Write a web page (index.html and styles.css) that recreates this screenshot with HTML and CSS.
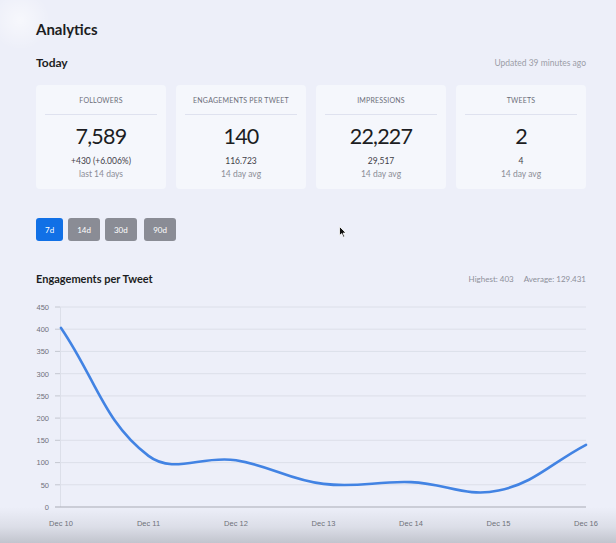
FILE: index.html
```html
<!DOCTYPE html>
<html>
<head>
<meta charset="utf-8">
<link rel="stylesheet" href="styles.css">
</head>
<body>
<div class="page">
  <h1 class="title">Analytics</h1>
  <div class="row-head">
    <h2 class="section">Today</h2>
    <span class="muted">Updated 39 minutes ago</span>
  </div>
  <div class="cards">
    <div class="card">
      <div class="card-label">FOLLOWERS</div>
      <div class="card-rule"></div>
      <div class="card-num">7,589</div>
      <div class="card-sub">+430 (+6.006%)</div>
      <div class="card-note">last 14 days</div>
    </div>
    <div class="card">
      <div class="card-label">ENGAGEMENTS PER TWEET</div>
      <div class="card-rule"></div>
      <div class="card-num">140</div>
      <div class="card-sub">116.723</div>
      <div class="card-note">14 day avg</div>
    </div>
    <div class="card">
      <div class="card-label">IMPRESSIONS</div>
      <div class="card-rule"></div>
      <div class="card-num">22,227</div>
      <div class="card-sub">29,517</div>
      <div class="card-note">14 day avg</div>
    </div>
    <div class="card">
      <div class="card-label">TWEETS</div>
      <div class="card-rule"></div>
      <div class="card-num">2</div>
      <div class="card-sub">4</div>
      <div class="card-note">14 day avg</div>
    </div>
  </div>
  <div class="ranges">
    <button class="range active">7d</button>
    <button class="range">14d</button>
    <button class="range">30d</button>
    <button class="range wide">90d</button>
  </div>
  <div class="row-head chart-head">
    <h2 class="section small">Engagements per Tweet</h2>
    <div class="stats"><span>Highest: 403</span><span>Average: 129.431</span></div>
  </div>
  <svg class="chart" width="550" height="250" viewBox="0 0 550 250">
    <g class="grid">
      <line x1="24" y1="17" x2="550" y2="17"/>
      <line x1="24" y1="39.2" x2="550" y2="39.2"/>
      <line x1="24" y1="61.4" x2="550" y2="61.4"/>
      <line x1="24" y1="83.7" x2="550" y2="83.7"/>
      <line x1="24" y1="105.9" x2="550" y2="105.9"/>
      <line x1="24" y1="128.1" x2="550" y2="128.1"/>
      <line x1="24" y1="150.3" x2="550" y2="150.3"/>
      <line x1="24" y1="172.6" x2="550" y2="172.6"/>
      <line x1="24" y1="194.8" x2="550" y2="194.8"/>
      <line x1="24.5" y1="17" x2="24.5" y2="217"/>
    </g>
    <g class="ticks">
      <line x1="19" y1="17" x2="24" y2="17"/>
      <line x1="19" y1="39.2" x2="24" y2="39.2"/>
      <line x1="19" y1="61.4" x2="24" y2="61.4"/>
      <line x1="19" y1="83.7" x2="24" y2="83.7"/>
      <line x1="19" y1="105.9" x2="24" y2="105.9"/>
      <line x1="19" y1="128.1" x2="24" y2="128.1"/>
      <line x1="19" y1="150.3" x2="24" y2="150.3"/>
      <line x1="19" y1="172.6" x2="24" y2="172.6"/>
      <line x1="19" y1="194.8" x2="24" y2="194.8"/>
    </g>
    <line class="axis" x1="19" y1="217" x2="550" y2="217"/>
    <g class="ylabels">
      <text x="13" y="19.8">450</text>
      <text x="13" y="42">400</text>
      <text x="13" y="64.2">350</text>
      <text x="13" y="86.5">300</text>
      <text x="13" y="108.7">250</text>
      <text x="13" y="130.9">200</text>
      <text x="13" y="153.1">150</text>
      <text x="13" y="175.4">100</text>
      <text x="13" y="197.6">50</text>
      <text x="13" y="219.8">0</text>
    </g>
    <g class="xlabels">
      <text x="25" y="236">Dec 10</text>
      <text x="112.5" y="236">Dec 11</text>
      <text x="200" y="236">Dec 12</text>
      <text x="287.5" y="236">Dec 13</text>
      <text x="375" y="236">Dec 14</text>
      <text x="462.5" y="236">Dec 15</text>
      <text x="550" y="236">Dec 16</text>
    </g>
    <path class="line" d="M25,37.9 C60,89.1 67.8,132.1 112.5,165.9 C137.8,185 165.5,164.8 200,170.3 C235.5,176 251.9,189.5 287.5,193.9 C321.9,198.2 340.1,190.8 375,192.1 C410.1,193.4 429.5,207.6 462.5,200.6 C499.5,192.7 515,173.1 550,154.8"/>
  </svg>
</div>
<svg class="cursor" width="8" height="12" viewBox="0 0 8 12"><path d="M0.5,0.5 L0.5,9.5 L2.7,7.6 L4.3,11.2 L5.6,10.6 L4.1,7.1 L7,7 Z" fill="#111" stroke="#fff" stroke-width="0.8"/></svg>
<div class="shade"></div>
</body>
</html>
```
FILE: styles.css
```css
html, body {
  margin: 0;
  padding: 0;
}
body {
  width: 616px;
  height: 543px;
  overflow: hidden;
  position: relative;
  background: radial-gradient(circle at 20px 20px, rgba(255,255,255,0.55) 0, rgba(255,255,255,0) 30px), #edeff9;
  font-family: Lato, "Noto Sans", sans-serif;
  color: #1d1e24;
}
.page {
  width: 550px;
  padding: 19px 0 0 36px;
}
.title {
  margin: 0;
  font-size: 15px;
  line-height: 20px;
  font-weight: 700;
  color: #1c1d22;
}
.row-head {
  display: flex;
  justify-content: space-between;
  align-items: center;
  margin-top: 16px;
  height: 16px;
}
.section {
  margin: 0;
  font-size: 12px;
  line-height: 16px;
  font-weight: 700;
  color: #1c1d22;
}
.section.small {
  font-size: 11px;
}
.muted {
  font-size: 8.5px;
  color: #9b9da7;
}
.cards {
  display: grid;
  grid-template-columns: repeat(4, 1fr);
  gap: 10px;
  margin-top: 14px;
}
.card {
  height: 104px;
  box-sizing: border-box;
  padding: 10px 9px 0;
  background: #f5f7fc;
  border-radius: 4px;
  text-align: center;
}
.card-label {
  font-size: 7px;
  line-height: 10px;
  letter-spacing: 0.2px;
  color: #6c6e79;
}
.card-rule {
  height: 1px;
  margin-top: 9px;
  background: #dfe2ef;
}
.card-num {
  margin-top: 8px;
  font-size: 21.5px;
  line-height: 26px;
  font-weight: 400;
  letter-spacing: -0.8px;
  color: #1c1d22;
}
.card-sub {
  margin-top: 6px;
  font-size: 8.5px;
  line-height: 12px;
  color: #3f4048;
}
.card-note {
  margin-top: 1px;
  font-size: 8.5px;
  line-height: 12px;
  color: #8b8d97;
}
.ranges {
  display: flex;
  gap: 5px;
  margin-top: 29px;
}
.range {
  height: 23px;
  padding: 0 9px;
  border: 0;
  border-radius: 3px;
  background: #8a8c95;
  color: #fff;
  font-family: Lato, "Noto Sans", sans-serif;
  font-size: 8px;
}
.range.active {
  background: #1170e6;
}
.range.wide {
  margin-left: 2px;
  padding: 0 9.5px;
}
.chart-head {
  margin-top: 31px;
  height: 14px;
}
.stats {
  display: flex;
  gap: 10px;
  font-size: 8px;
  color: #8e909a;
}
.chart {
  display: block;
  margin-top: 4px;
  overflow: visible;
}
.grid line {
  stroke: #dcdfe9;
  stroke-width: 1;
}
.ticks line {
  stroke: #c4c7d0;
  stroke-width: 1;
}
.axis {
  stroke: #a9acb6;
  stroke-width: 1.2;
}
.ylabels text {
  font-family: "Liberation Sans", Arial, sans-serif;
  font-size: 7.5px;
  fill: #6f717a;
  text-anchor: end;
}
.xlabels text {
  font-family: "Liberation Sans", Arial, sans-serif;
  font-size: 7.5px;
  fill: #55575f;
  text-anchor: middle;
}
.line {
  fill: none;
  stroke: #4283e3;
  stroke-width: 2.6;
  stroke-linecap: round;
}
.cursor {
  position: absolute;
  left: 339px;
  top: 226px;
}
.shade {
  position: absolute;
  left: 0;
  right: 0;
  bottom: 0;
  height: 36px;
  background: linear-gradient(to bottom, rgba(180,183,192,0) 0%, rgba(180,183,192,0.3) 55%, rgba(170,173,182,0.65) 100%);
  pointer-events: none;
}
```
